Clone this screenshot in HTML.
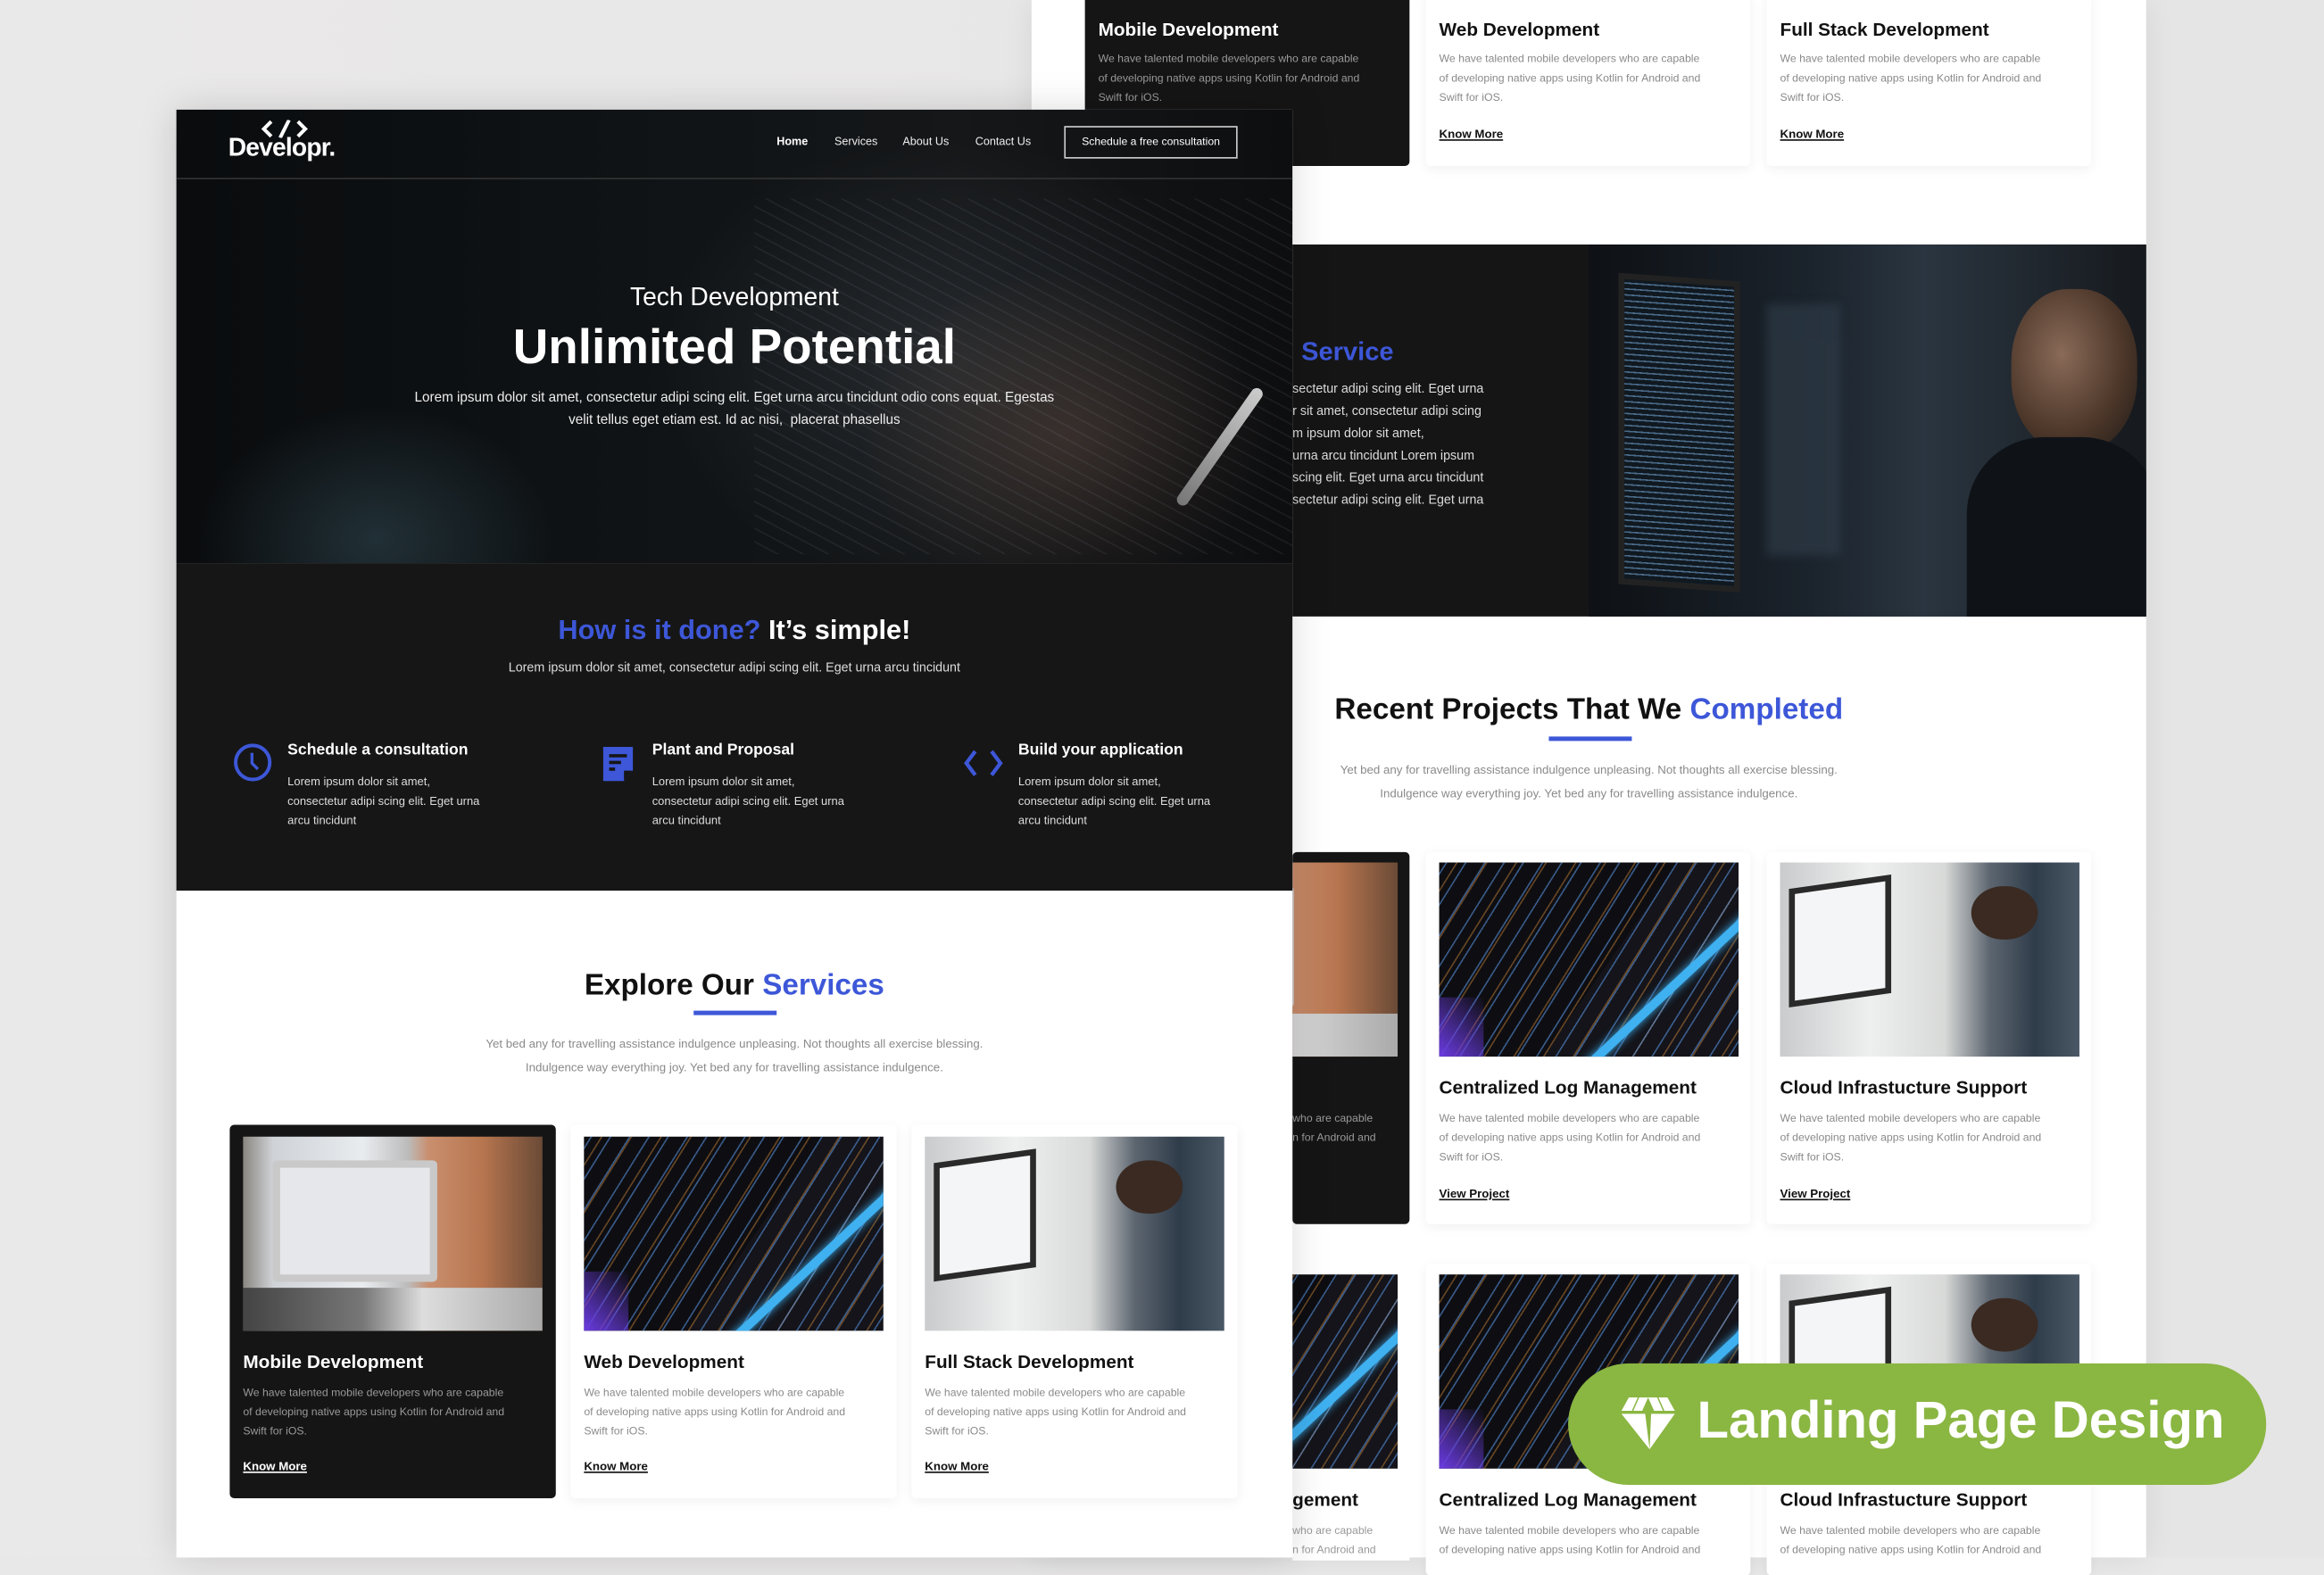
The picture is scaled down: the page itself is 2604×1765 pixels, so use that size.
<!DOCTYPE html>
<html><head><meta charset="utf-8">
<style>
*{margin:0;padding:0;box-sizing:border-box}
html,body{width:2604px;height:1746px;overflow:hidden;background:#e9e8e8}
#s{position:absolute;left:0;top:0;width:1568px;height:1051px;transform:scale(1.66071);transform-origin:0 0;font-family:"Liberation Sans",sans-serif;background:linear-gradient(90deg,#eae9e9,#e6e5e5)}
.a{position:absolute}
.t{white-space:nowrap}
.card{position:absolute;background:#fff;box-shadow:0 2px 8px rgba(0,0,0,.06);border-radius:3px}
.dark{background:#151515;border-radius:3px}
.ct{position:absolute;font-size:12.5px;font-weight:bold;color:#111;white-space:nowrap}
.dark .ct{color:#fff}
.cp{position:absolute;font-size:7.4px;line-height:12.8px;color:#8a8a8a;width:180px}
.dark .cp{color:#999}
.km{position:absolute;font-size:8px;font-weight:bold;color:#111;text-decoration:underline;white-space:nowrap}
.dark .km{color:#fff}
.img{position:absolute;overflow:hidden}
.code{background:
 repeating-linear-gradient(-58deg,transparent 0 5px,rgba(90,150,230,.55) 5px 6px,transparent 6px 11px),
 repeating-linear-gradient(-58deg,transparent 0 9px,rgba(230,150,60,.4) 9px 10px,transparent 10px 17px),
 linear-gradient(125deg,#0e0e12 0 55%,#14141a 55% 100%);}
.code:after{content:"";position:absolute;left:40%;top:115%;width:180px;height:6px;background:#3fb0f0;transform:rotate(-43deg);transform-origin:0 0;box-shadow:0 0 6px #3fb0f0}
.code:before{content:"";position:absolute;left:0;bottom:0;width:30px;height:40px;background:linear-gradient(45deg,#6a3be0,transparent)}
.mob{background:linear-gradient(90deg,#8a8680 0,#cfd2d6 10%,#e9ecef 40%,#bcbcbc 55%,#c98f6e 62%,#b7754f 80%,#6a4a36 100%)}
.mob:before{content:"";position:absolute;left:10%;top:12%;width:50%;height:55%;background:#e6e7ea;border:5px solid #c9c9c9;border-radius:3px}
.mob:after{content:"";position:absolute;left:0;bottom:0;width:100%;height:22%;background:linear-gradient(90deg,#444,#777 40%,#ddd 60%,#aaa)}
.fs{background:linear-gradient(90deg,#c9cbcc 0,#eef0f0 30%,#d8d9d8 55%,#5d6670 70%,#2f3c4a 85%,#4a5866 100%)}
.fs:before{content:"";position:absolute;left:3%;top:10%;width:30%;height:55%;background:#f4f5f6;border:4px solid #2a2a2a;transform:skewY(-8deg)}
.fs:after{content:"";position:absolute;left:64%;top:12%;width:22%;height:28%;border-radius:50%;background:#3a2a22}
.h2{position:absolute;font-size:20px;font-weight:bold;color:#111;white-space:nowrap;text-align:center}
.blue{color:#3d57d8}
.sub{position:absolute;font-size:8px;line-height:15.5px;color:#8a8a8a;text-align:center}
</style></head><body><div id="s">

<div class="a" style="left:696px;top:0;width:752px;height:1051px;background:#fff;box-shadow:0 0 20px rgba(0,0,0,.08)"></div>
<div class="a dark" style="left:732px;top:-5px;width:219px;height:117px">
 <div class="ct" style="left:9px;top:18px">Mobile Development</div>
 <div class="cp" style="left:9px;top:39px">We have talented mobile developers who are capable of developing native apps using Kotlin for Android and Swift for iOS.</div>
</div>
<div class="card" style="left:962px;top:-5px;width:219px;height:117px">
 <div class="ct" style="left:9px;top:18px">Web Development</div>
 <div class="cp" style="left:9px;top:39px">We have talented mobile developers who are capable of developing native apps using Kotlin for Android and Swift for iOS.</div>
 <div class="km" style="left:9px;top:91px">Know More</div>
</div>
<div class="card" style="left:1192px;top:-5px;width:219px;height:117px">
 <div class="ct" style="left:9px;top:18px">Full Stack Development</div>
 <div class="cp" style="left:9px;top:39px">We have talented mobile developers who are capable of developing native apps using Kotlin for Android and Swift for iOS.</div>
 <div class="km" style="left:9px;top:91px">Know More</div>
</div>

<div class="a" style="left:696px;top:165px;width:752px;height:251px;background:#151515"></div>
<div class="a" style="left:1072px;top:165px;width:376px;height:251px;overflow:hidden;background:linear-gradient(90deg,#0e1115 0,#1b232c 40%,#2a3540 60%,#16191d 100%)">
 <div class="a" style="left:20px;top:22px;width:82px;height:210px;background:repeating-linear-gradient(0deg,#101820 0 3px,#4a6a88 3px 4px);border:4px solid #222;transform:skewY(4deg)"></div>
 <div class="a" style="left:120px;top:40px;width:50px;height:170px;background:#2d3a46;opacity:.7;filter:blur(3px)"></div>
 <div class="a" style="left:285px;top:30px;width:85px;height:110px;border-radius:45%;background:radial-gradient(ellipse at 40% 40%,#8a6a58,#4a3528 60%,#1d1a18)"></div>
 <div class="a" style="left:255px;top:130px;width:130px;height:130px;border-radius:40% 40% 0 0;background:#0f1318"></div>
</div>
<div class="a t" style="left:878px;top:227px;font-size:17.5px;font-weight:bold;color:#3d57d8">Service</div>
<div class="a" style="left:872px;top:255px;font-size:8.6px;line-height:15.1px;color:#ddd;white-space:nowrap">sectetur adipi scing elit. Eget urna<br>r sit amet, consectetur adipi scing<br>m ipsum dolor sit amet,<br>urna arcu tincidunt Lorem ipsum<br>scing elit. Eget urna arcu tincidunt<br>sectetur adipi scing elit. Eget urna</div>

<div class="h2" style="left:872px;top:468px;width:400px">Recent Projects That We <span class="blue">Completed</span></div>
<div class="a" style="left:1045px;top:497px;width:56px;height:3px;background:#3d57d8"></div>
<div class="sub" style="left:872px;top:512px;width:400px">Yet bed any for travelling assistance indulgence unpleasing. Not thoughts all exercise blessing.<br>Indulgence way everything joy. Yet bed any for travelling assistance indulgence.</div>

<div class="a dark" style="left:872px;top:575px;width:79px;height:251px;overflow:hidden">
 <div class="img mob" style="left:-130px;top:7px;width:201px;height:131px"></div>
 <div class="a" style="left:0;top:174px;font-size:7.4px;line-height:12.8px;color:#999;white-space:nowrap">who are capable<br>n for Android and</div>
</div>
<div class="card" style="left:962px;top:575px;width:219px;height:251px">
 <div class="img code" style="left:9px;top:7px;width:202px;height:131px"></div>
 <div class="ct" style="left:9px;top:152px">Centralized Log Management</div>
 <div class="cp" style="left:9px;top:174px">We have talented mobile developers who are capable of developing native apps using Kotlin for Android and Swift for iOS.</div>
 <div class="km" style="left:9px;top:226px">View Project</div>
</div>
<div class="card" style="left:1192px;top:575px;width:219px;height:251px">
 <div class="img fs" style="left:9px;top:7px;width:202px;height:131px"></div>
 <div class="ct" style="left:9px;top:152px">Cloud Infrastucture Support</div>
 <div class="cp" style="left:9px;top:174px">We have talented mobile developers who are capable of developing native apps using Kotlin for Android and Swift for iOS.</div>
 <div class="km" style="left:9px;top:226px">View Project</div>
</div>

<div class="a" style="left:872px;top:853px;width:79px;height:200px;background:#fff;overflow:hidden">
 <div class="img code" style="left:-130px;top:7px;width:201px;height:131px"></div>
 <div class="ct" style="left:0;top:152px">gement</div>
 <div class="a" style="left:0;top:174px;font-size:7.4px;line-height:12.8px;color:#999;white-space:nowrap">who are capable<br>n for Android and</div>
</div>
<div class="card" style="left:962px;top:853px;width:219px;height:210px">
 <div class="img code" style="left:9px;top:7px;width:202px;height:131px"></div>
 <div class="ct" style="left:9px;top:152px">Centralized Log Management</div>
 <div class="cp" style="left:9px;top:174px">We have talented mobile developers who are capable of developing native apps using Kotlin for Android and</div>
</div>
<div class="card" style="left:1192px;top:853px;width:219px;height:210px">
 <div class="img fs" style="left:9px;top:7px;width:202px;height:131px"></div>
 <div class="ct" style="left:9px;top:152px">Cloud Infrastucture Support</div>
 <div class="cp" style="left:9px;top:174px">We have talented mobile developers who are capable of developing native apps using Kotlin for Android and</div>
</div>

<div class="a" style="left:119px;top:74px;width:753px;height:977px;background:#fff;box-shadow:0 0 24px rgba(0,0,0,.15)"></div>
<div class="a" style="left:119px;top:74px;width:753px;height:306px;overflow:hidden;background:
 radial-gradient(ellipse 120px 90px at 135px 290px,rgba(50,75,85,.55),transparent),
 radial-gradient(ellipse 140px 110px at 600px 220px,rgba(110,80,65,.35),transparent),
 radial-gradient(ellipse 200px 150px at 520px 170px,rgba(55,60,65,.5),transparent),
 linear-gradient(90deg,#0a0c0e 0,#0f1315 40%,#151719 70%,#0d0e10 100%)">
 <div class="a" style="left:390px;top:60px;width:380px;height:240px;background:repeating-linear-gradient(28deg,transparent 0 7px,rgba(180,200,220,.08) 7px 8px);"></div>
 <div class="a" style="left:700px;top:180px;width:8px;height:95px;background:linear-gradient(#ccc,#777);transform:rotate(35deg);border-radius:4px"></div>
</div>
<div class="a" style="left:119px;top:120px;width:753px;height:1px;background:#333"></div>
<svg class="a" style="left:176px;top:81px" width="32" height="12" viewBox="0 0 32 12"><path d="M7 1 L2 6 L7 11 M25 1 L30 6 L25 11 M19 0 L13 12" stroke="#fff" stroke-width="2.4" fill="none"/></svg>
<div class="a t" style="left:154px;top:90px;font-size:17px;font-weight:bold;color:#fff;letter-spacing:-.5px">Developr.</div>
<div class="a t" style="left:524px;top:91px;font-size:7.6px;color:#fff;font-weight:bold">Home</div>
<div class="a t" style="left:563px;top:91px;font-size:7.6px;color:#eee">Services</div>
<div class="a t" style="left:609px;top:91px;font-size:7.6px;color:#eee">About Us</div>
<div class="a t" style="left:658px;top:91px;font-size:7.6px;color:#eee">Contact Us</div>
<div class="a t" style="left:718px;top:85px;width:117px;height:22px;border:1px solid #ccc;font-size:7.4px;color:#fff;text-align:center;line-height:20px">Schedule a free consultation</div>

<div class="a t" style="left:119px;top:191px;width:753px;text-align:center;font-size:17px;color:#fff">Tech Development</div>
<div class="a t" style="left:119px;top:215px;width:753px;text-align:center;font-size:33px;font-weight:bold;color:#fff">Unlimited Potential</div>
<div class="a" style="left:119px;top:261px;width:753px;text-align:center;font-size:9.2px;line-height:15px;color:#eee">Lorem ipsum dolor sit amet, consectetur adipi scing elit. Eget urna arcu tincidunt odio cons equat. Egestas<br>velit tellus eget etiam est. Id ac nisi,&nbsp; placerat phasellus</div>

<div class="a" style="left:119px;top:380px;width:753px;height:221px;background:#161616"></div>
<div class="a t" style="left:119px;top:414px;width:753px;text-align:center;font-size:18.5px;font-weight:bold;color:#fff"><span class="blue">How is it done?</span> It’s simple!</div>
<div class="a t" style="left:119px;top:445px;width:753px;text-align:center;font-size:8.6px;color:#ddd">Lorem ipsum dolor sit amet, consectetur adipi scing elit. Eget urna arcu tincidunt</div>

<svg class="a" style="left:157px;top:501px" width="27" height="27" viewBox="0 0 27 27"><circle cx="13.5" cy="13.5" r="11.5" stroke="#3d57d8" stroke-width="2.4" fill="none"/><path d="M13 7 V14 L17 18" stroke="#3d57d8" stroke-width="2" fill="none"/></svg>
<svg class="a" style="left:404px;top:502px" width="26" height="27" viewBox="0 0 26 27"><path d="M3 2 H23 V18 L17 25 H3 Z" fill="#3d57d8"/><path d="M7 8 H19 M7 12.5 H15 M7 17 H11" stroke="#161616" stroke-width="2.2"/><path d="M17 25 V18 H23" fill="#161616"/></svg>
<svg class="a" style="left:650px;top:505px" width="27" height="20" viewBox="0 0 27 20"><path d="M8 2 L2 10 L8 18 M19 2 L25 10 L19 18" stroke="#3d57d8" stroke-width="2.6" fill="none"/></svg>

<div class="a t" style="left:194px;top:500px;font-size:10.6px;font-weight:bold;color:#fff">Schedule a consultation</div>
<div class="a" style="left:194px;top:521px;font-size:7.8px;line-height:13px;color:#ddd;width:160px">Lorem ipsum dolor sit amet,<br>consectetur adipi scing elit. Eget urna<br>arcu tincidunt</div>
<div class="a t" style="left:440px;top:500px;font-size:10.6px;font-weight:bold;color:#fff">Plant and Proposal</div>
<div class="a" style="left:440px;top:521px;font-size:7.8px;line-height:13px;color:#ddd;width:160px">Lorem ipsum dolor sit amet,<br>consectetur adipi scing elit. Eget urna<br>arcu tincidunt</div>
<div class="a t" style="left:687px;top:500px;font-size:10.6px;font-weight:bold;color:#fff">Build your application</div>
<div class="a" style="left:687px;top:521px;font-size:7.8px;line-height:13px;color:#ddd;width:160px">Lorem ipsum dolor sit amet,<br>consectetur adipi scing elit. Eget urna<br>arcu tincidunt</div>

<div class="h2" style="left:119px;top:654px;width:753px">Explore Our <span class="blue">Services</span></div>
<div class="a" style="left:468px;top:682px;width:56px;height:3px;background:#3d57d8"></div>
<div class="sub" style="left:119px;top:697px;width:753px">Yet bed any for travelling assistance indulgence unpleasing. Not thoughts all exercise blessing.<br>Indulgence way everything joy. Yet bed any for travelling assistance indulgence.</div>

<div class="a dark" style="left:155px;top:759px;width:220px;height:252px">
 <div class="img mob" style="left:9px;top:8px;width:202px;height:131px"></div>
 <div class="ct" style="left:9px;top:153px">Mobile Development</div>
 <div class="cp" style="left:9px;top:175px">We have talented mobile developers who are capable of developing native apps using Kotlin for Android and Swift for iOS.</div>
 <div class="km" style="left:9px;top:226px">Know More</div>
</div>
<div class="card" style="left:385px;top:759px;width:220px;height:252px">
 <div class="img code" style="left:9px;top:8px;width:202px;height:131px"></div>
 <div class="ct" style="left:9px;top:153px">Web Development</div>
 <div class="cp" style="left:9px;top:175px">We have talented mobile developers who are capable of developing native apps using Kotlin for Android and Swift for iOS.</div>
 <div class="km" style="left:9px;top:226px">Know More</div>
</div>
<div class="card" style="left:615px;top:759px;width:220px;height:252px">
 <div class="img fs" style="left:9px;top:8px;width:202px;height:131px"></div>
 <div class="ct" style="left:9px;top:153px">Full Stack Development</div>
 <div class="cp" style="left:9px;top:175px">We have talented mobile developers who are capable of developing native apps using Kotlin for Android and Swift for iOS.</div>
 <div class="km" style="left:9px;top:226px">Know More</div>
</div>

<div class="a" style="left:1058px;top:920px;width:471px;height:82px;border-radius:41px;background:#8ab642"></div>
<svg class="a" style="left:1093px;top:943px" width="38" height="36" viewBox="0 0 38 36"><path d="M1 9 L6 0 H12 L8 9 Z M13 0 H25 L29 9 H9 Z" fill="#fff"/><path d="M30 9 L26 0 H32 L37 9 Z" fill="#fff"/><path d="M1 11 H17 L20 35 Z M21 11 H37 L20 35 Z" fill="#fff"/><path d="M19 0 L15 9 H23 Z" fill="#8ab642"/></svg>
<div class="a t" style="left:1145px;top:939px;font-size:35px;font-weight:bold;color:#fff">Landing Page Design</div>

</div></body></html>
